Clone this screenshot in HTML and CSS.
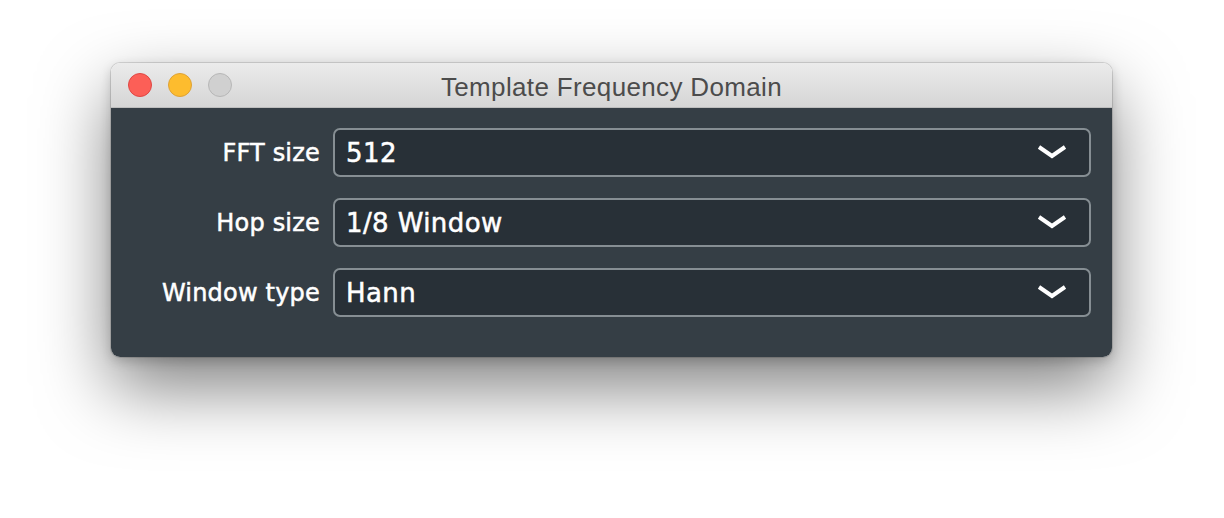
FILE: index.html
```html
<!DOCTYPE html>
<html>
<head>
<meta charset="utf-8">
<link rel="stylesheet" href="styles.css">
</head>
<body>
<div class="stage">
  <div class="window">
    <div class="titlebar">
      <div class="lights">
        <span class="light red"></span>
        <span class="light yellow"></span>
        <span class="light gray"></span>
      </div>
      <div class="title">Template Frequency Domain</div>
    </div>
    <div class="content">
      <div class="form">
        <div class="label">FFT size</div>
        <div class="combo"><span class="value">512</span>
          <svg class="chev" width="30" height="14" viewBox="0 0 30 14"><polyline points="2,2 15,11 28,2" fill="none" stroke="#ffffff" stroke-width="4" stroke-linejoin="miter"/></svg>
        </div>
        <div class="label">Hop size</div>
        <div class="combo"><span class="value">1/8 Window</span>
          <svg class="chev" width="30" height="14" viewBox="0 0 30 14"><polyline points="2,2 15,11 28,2" fill="none" stroke="#ffffff" stroke-width="4" stroke-linejoin="miter"/></svg>
        </div>
        <div class="label">Window type</div>
        <div class="combo"><span class="value">Hann</span>
          <svg class="chev" width="30" height="14" viewBox="0 0 30 14"><polyline points="2,2 15,11 28,2" fill="none" stroke="#ffffff" stroke-width="4" stroke-linejoin="miter"/></svg>
        </div>
      </div>
    </div>
  </div>
</div>
</body>
</html>
```
FILE: styles.css
```css
html, body {
  margin: 0;
  padding: 0;
  background: #ffffff;
  width: 1224px;
  height: 518px;
  overflow: hidden;
}
.stage {
  padding: 63px 0 0 111px;
}
.window {
  width: 1001px;
  height: 294px;
  border-radius: 9px;
  overflow: hidden;
  display: flex;
  flex-direction: column;
  box-shadow: 0 0 0 1px rgba(0,0,0,0.12), 0 30px 70px rgba(0,0,0,0.5), 0 4px 12px rgba(0,0,0,0.18);
}
.titlebar {
  height: 44px;
  flex: none;
  background: linear-gradient(#ebebeb, #d5d5d5);
  border-bottom: 1px solid #bdbdbd;
  display: flex;
  align-items: center;
  position: relative;
}
.lights {
  display: flex;
  gap: 16px;
  padding-left: 17px;
  position: relative;
  z-index: 1;
}
.light {
  width: 22px;
  height: 22px;
  border-radius: 50%;
  display: block;
}
.red { background: #fc5f57; border: 1px solid #df4744; }
.yellow { background: #fdbc2e; border: 1px solid #dea236; }
.gray { background: #d0d0d0; border: 1px solid #b7b7b7; }
.title {
  position: absolute;
  left: 0;
  right: 0;
  top: 0;
  bottom: 0;
  display: flex;
  align-items: center;
  justify-content: center;
  font-family: "Liberation Sans", Arial, sans-serif;
  font-size: 26px;
  letter-spacing: 0.35px;
  color: #4c4c4c;
  padding-top: 5px;
}
.content {
  flex: 1;
  background: #353e45;
  padding: 20px 21px 0 0;
}
.form {
  display: grid;
  grid-template-columns: 209px 1fr;
  column-gap: 13px;
  row-gap: 21px;
  align-items: center;
}
.label {
  text-align: right;
  font-family: "DejaVu Sans", sans-serif;
  font-size: 24px;
  letter-spacing: 0.2px;
  color: #ffffff;
  -webkit-text-stroke: 0.5px #ffffff;
}
.combo {
  height: 45px;
  border: 2px solid #868e93;
  border-radius: 7px;
  background: #283037;
  display: flex;
  align-items: center;
  justify-content: space-between;
  padding: 0 22px 0 11px;
}
.value {
  font-family: "DejaVu Sans", sans-serif;
  font-size: 26px;
  letter-spacing: 0.4px;
  color: #ffffff;
  -webkit-text-stroke: 0.5px #ffffff;
}
.chev {
  display: block;
  margin-top: -2px;
}
```
